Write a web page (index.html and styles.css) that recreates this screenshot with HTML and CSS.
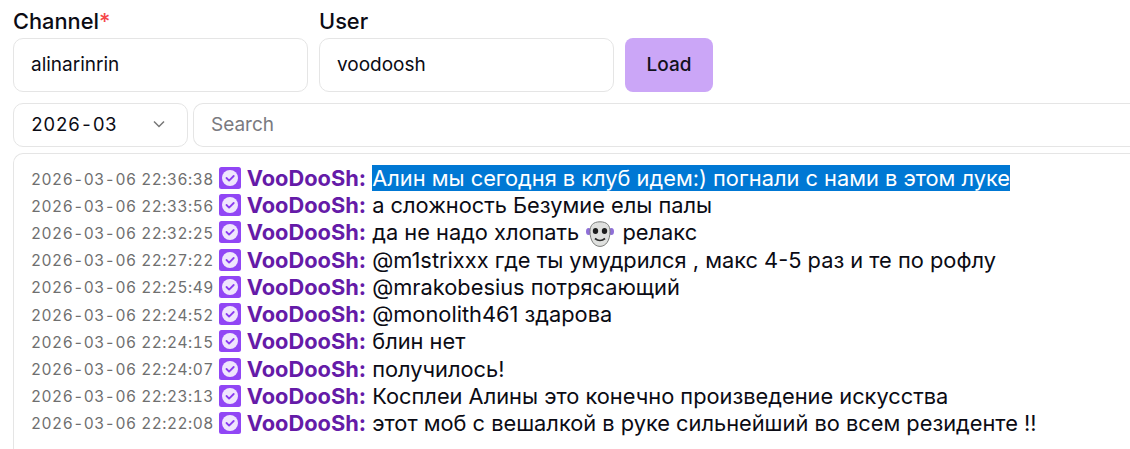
FILE: index.html
```html
<!DOCTYPE html>
<html lang="en">
<head>
    <meta charset="UTF-8">
    <meta name="viewport" content="width=device-width, initial-scale=1.0">
    <title>Logs</title>
    <link rel="stylesheet" href="styles.css">
</head>
<body>
    <svg class="defs" width="0" height="0">
        <symbol id="badge" viewBox="0 0 22 22">
            <rect width="22" height="22" rx="2.5" fill="#9146f5"/>
            <circle cx="11" cy="11" r="8" fill="#efe6fd"/>
            <path d="M7.5 11l2.6 2.6 4.6-4.6" fill="none" stroke="#8a3cf0" stroke-width="1.8" stroke-linecap="round" stroke-linejoin="round"/>
        </symbol>
    </svg>

    <form class="filters">
        <div class="field">
            <label>Channel<span class="required">*</span></label>
            <input class="input" type="text" value="alinarinrin">
        </div>
        <div class="field">
            <label>User</label>
            <input class="input" type="text" value="voodoosh">
        </div>
        <button class="load" type="button">Load</button>
    </form>

    <div class="toolbar">
        <div class="month">
            <span>2026-03</span>
            <svg width="14" height="14" viewBox="0 0 14 14"><path d="M2 4.5l5 5 5-5" fill="none" stroke="#777" stroke-width="1.5"/></svg>
        </div>
        <input class="search" type="text" placeholder="Search">
    </div>

    <div class="log">
        <div class="line"><span class="time">2026-03-06 22:36:38</span><svg class="badge"><use href="#badge"/></svg><span class="name">VooDooSh:</span> <span class="picked">Алин мы сегодня в клуб идем:) погнали с нами в этом луке</span></div>
        <div class="line"><span class="time">2026-03-06 22:33:56</span><svg class="badge"><use href="#badge"/></svg><span class="name">VooDooSh:</span> а сложность Безумие елы палы</div>
        <div class="line"><span class="time">2026-03-06 22:32:25</span><svg class="badge"><use href="#badge"/></svg><span class="name">VooDooSh:</span> да не надо хлопать
            <svg class="emote" viewBox="0 0 28 26">
                <ellipse cx="2.6" cy="10.5" rx="2.6" ry="3.6" fill="#8f6fd8"/>
                <ellipse cx="25.4" cy="10.5" rx="2.6" ry="3.6" fill="#8f6fd8"/>
                <path d="M14 .8c7 0 10 3.6 10 9.6 0 9-4 15-10 15S4 19.4 4 10.4C4 4.4 7 .8 14 .8z" fill="#dfe0de" stroke="#7b7d7b"/>
                <ellipse cx="9.5" cy="10" rx="2.7" ry="3" fill="#1d1d1d"/>
                <ellipse cx="18.5" cy="10" rx="2.7" ry="3" fill="#1d1d1d"/>
                <path d="M9 17.5c3 2.6 7 2.6 10 0" fill="none" stroke="#2c2c2c" stroke-width="1.7"/>
            </svg>
            релакс</div>
        <div class="line"><span class="time">2026-03-06 22:27:22</span><svg class="badge"><use href="#badge"/></svg><span class="name">VooDooSh:</span> @m1strixxx где ты умудрился , макс 4-5 раз и те по рофлу</div>
        <div class="line"><span class="time">2026-03-06 22:25:49</span><svg class="badge"><use href="#badge"/></svg><span class="name">VooDooSh:</span> @mrakobesius потрясающий</div>
        <div class="line"><span class="time">2026-03-06 22:24:52</span><svg class="badge"><use href="#badge"/></svg><span class="name">VooDooSh:</span> @monolith461 здарова</div>
        <div class="line"><span class="time">2026-03-06 22:24:15</span><svg class="badge"><use href="#badge"/></svg><span class="name">VooDooSh:</span> блин нет</div>
        <div class="line"><span class="time">2026-03-06 22:24:07</span><svg class="badge"><use href="#badge"/></svg><span class="name">VooDooSh:</span> получилось!</div>
        <div class="line"><span class="time">2026-03-06 22:23:13</span><svg class="badge"><use href="#badge"/></svg><span class="name">VooDooSh:</span> Косплеи Алины это конечно произведение искусства</div>
        <div class="line"><span class="time">2026-03-06 22:22:08</span><svg class="badge"><use href="#badge"/></svg><span class="name">VooDooSh:</span> этот моб с вешалкой в руке сильнейший во всем резиденте !!</div>
    </div>
</body>
</html>
```

FILE: styles.css
```css
html, body {
    height: 449px;
    overflow: hidden;
}
body {
    margin: 0;
    padding: 9px 0 0 13px;
    box-sizing: border-box;
    font-family: Inter, sans-serif;
    color: #0b0b14;
    background: #fff;
}
.defs {
    position: absolute;
}
.filters {
    display: flex;
    align-items: flex-end;
    gap: 11px;
}
.field {
    display: flex;
    flex-direction: column;
    width: 295px;
}
.field label {
    font-size: 21.8px;
    font-weight: 500;
    line-height: 24px;
    margin-bottom: 5px;
}
.required {
    color: #f5484a;
}
.input, .search {
    font-family: inherit;
    color: inherit;
    background: #fff;
    box-sizing: border-box;
    border: 1px solid #e5e5e5;
    outline: none;
}
.input {
    height: 54px;
    width: 100%;
    padding: 0 17px 2px;
    font-size: 19px;
    border-radius: 10px;
}
.load {
    width: 88px;
    height: 54px;
    padding: 0 0 2px;
    border: none;
    border-radius: 8px;
    background: #cba6f7;
    color: #11111b;
    font-family: inherit;
    font-size: 19px;
    font-weight: 500;
}
.toolbar {
    display: flex;
    gap: 5px;
    margin-top: 11px;
}
.month {
    display: flex;
    align-items: center;
    justify-content: space-between;
    box-sizing: border-box;
    width: 175px;
    height: 44px;
    padding: 0 21px 2px 17px;
    border: 1px solid #e5e5e5;
    border-radius: 10px;
    font-size: 18.5px;
    letter-spacing: 0.35px;
    font-variant-numeric: tabular-nums;
}
.search {
    flex: 1;
    min-width: 0;
    height: 44px;
    padding: 0 17px 2px;
    font-size: 19px;
    border-right: none;
    border-radius: 10px 0 0 10px;
}
.search::placeholder {
    color: #7a7a80;
}
.log {
    box-sizing: border-box;
    margin-top: 6px;
    padding: 11px 17px 0;
    height: 296px;
    border: 1px solid #e5e5e5;
    border-width: 1px 0 0 1px;
    border-radius: 10px 0 0 0;
}
.line {
    height: 27.22px;
    font-size: 21.8px;
    line-height: 27.22px;
    white-space: nowrap;
}
.time {
    font-size: 15.5px;
    color: #6f6f6f;
    letter-spacing: 0.5px;
    font-variant-numeric: tabular-nums;
    margin-right: 5px;
    vertical-align: 1.5px;
}
.badge {
    width: 22px;
    height: 22px;
    vertical-align: -3px;
    margin-right: 6px;
}
.name {
    font-weight: 700;
    color: #651ba8;
}
.picked {
    background: #0078d4;
    color: #fff;
}
.emote {
    width: 28px;
    height: 26px;
    margin: 0 2px 0 1px;
    vertical-align: -7px;
}
```
